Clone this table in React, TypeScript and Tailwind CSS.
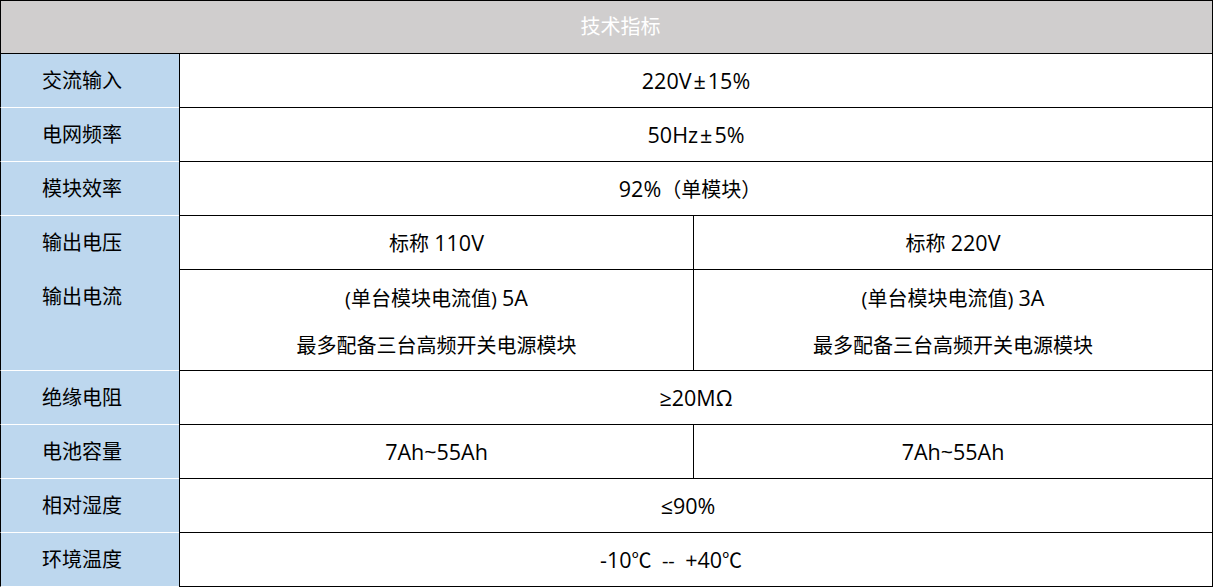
import React from 'react';

const font = { fontFamily: '"Open Sans", "Noto Sans CJK SC", sans-serif' };

type Row = { label: string; values: string[]; pad?: string };

const topRows: Row[] = [
  { label: '交流输入', values: ['220V±15%'] },
  { label: '电网频率', values: ['50Hz±5%'] },
  { label: '模块效率', values: ['92%（单模块）'], pad: 'pr-[12px]' },
];

const bottomRows: Row[] = [
  { label: '绝缘电阻', values: ['≥20MΩ'] },
  { label: '电池容量', values: ['7Ah~55Ah', '7Ah~55Ah'] },
  { label: '相对湿度', values: ['≤90%'], pad: 'pr-[16px]' },
  { label: '环境温度', values: ['-10℃  --  +40℃'], pad: 'pr-[50px]' },
];

// latin runs are a touch larger than the CJK glyphs in the source sheet
function Mixed({ text }: { text: string }) {
  const parts = text.split(/([A-Za-z0-9%~()+\-.±≥≤Ω]+)/);
  return (
    <span className="whitespace-pre">
      {parts.map((p, i) =>
        /[A-Za-z0-9%]/.test(p) ? (
          <span key={i} className="text-[21.5px]">
            {p.split('±').map((s, j) => (
              <React.Fragment key={j}>
                {j > 0 && <span className="mx-[2px]">±</span>}
                {s}
              </React.Fragment>
            ))}
          </span>
        ) : (
          <span key={i}>{p}</span>
        )
      )}
    </span>
  );
}

function Label({ children, className = '' }: { children: React.ReactNode; className?: string }) {
  return (
    <div className={`w-[179px] shrink-0 bg-[#bdd7ee] border-l border-l-black border-b border-b-white pl-[41px] ${className}`}>
      {children}
    </div>
  );
}

function DataRow({ row }: { row: Row }) {
  const split = row.values.length > 1;
  return (
    <div className="flex h-[54px]">
      <Label className="flex items-center">{row.label}</Label>
      <div className="flex flex-1 border-l border-b border-r border-black">
        {row.values.map((v, i) => (
          <div
            key={i}
            className={`flex items-center justify-center ${row.pad ?? ''} ${split && i === 0 ? 'w-[513px] shrink-0' : 'flex-1'} ${i > 0 ? 'border-l border-black' : ''}`}
          >
            <Mixed text={v} />
          </div>
        ))}
      </div>
    </div>
  );
}

export default function App() {
  return (
    <div className="w-[1213px] h-[588px] bg-white text-black text-[20px] leading-none" style={font}>
      {/* header */}
      <div className="h-[54px] bg-[#d0cece] border-t border-l border-r border-b border-black flex items-center justify-center pl-[28px] text-white">
        技术指标
      </div>

      {topRows.map((r) => (
        <DataRow key={r.label} row={r} />
      ))}

      {/* output voltage / current block */}
      <div className="flex h-[155px]">
        <Label className="flex flex-col">
          <div className="h-[54px] flex items-center">输出电压</div>
          <div className="h-[54px] flex items-center">输出电流</div>
        </Label>
        <div className="flex flex-1 border-l border-b border-r border-black">
          <div className="w-[513px] shrink-0 flex flex-col">
            <div className="h-[54px] flex items-center justify-center border-b border-black">
              <Mixed text="标称 110V" />
            </div>
            <div className="flex-1 flex flex-col items-center pt-[17px] gap-[27px]">
              <Mixed text="(单台模块电流值) 5A" />
              <div>最多配备三台高频开关电源模块</div>
            </div>
          </div>
          <div className="flex-1 flex flex-col border-l border-black">
            <div className="h-[54px] flex items-center justify-center border-b border-black">
              <Mixed text="标称 220V" />
            </div>
            <div className="flex-1 flex flex-col items-center pt-[17px] gap-[27px]">
              <Mixed text="(单台模块电流值) 3A" />
              <div>最多配备三台高频开关电源模块</div>
            </div>
          </div>
        </div>
      </div>

      {bottomRows.map((r) => (
        <DataRow key={r.label} row={r} />
      ))}
    </div>
  );
}
